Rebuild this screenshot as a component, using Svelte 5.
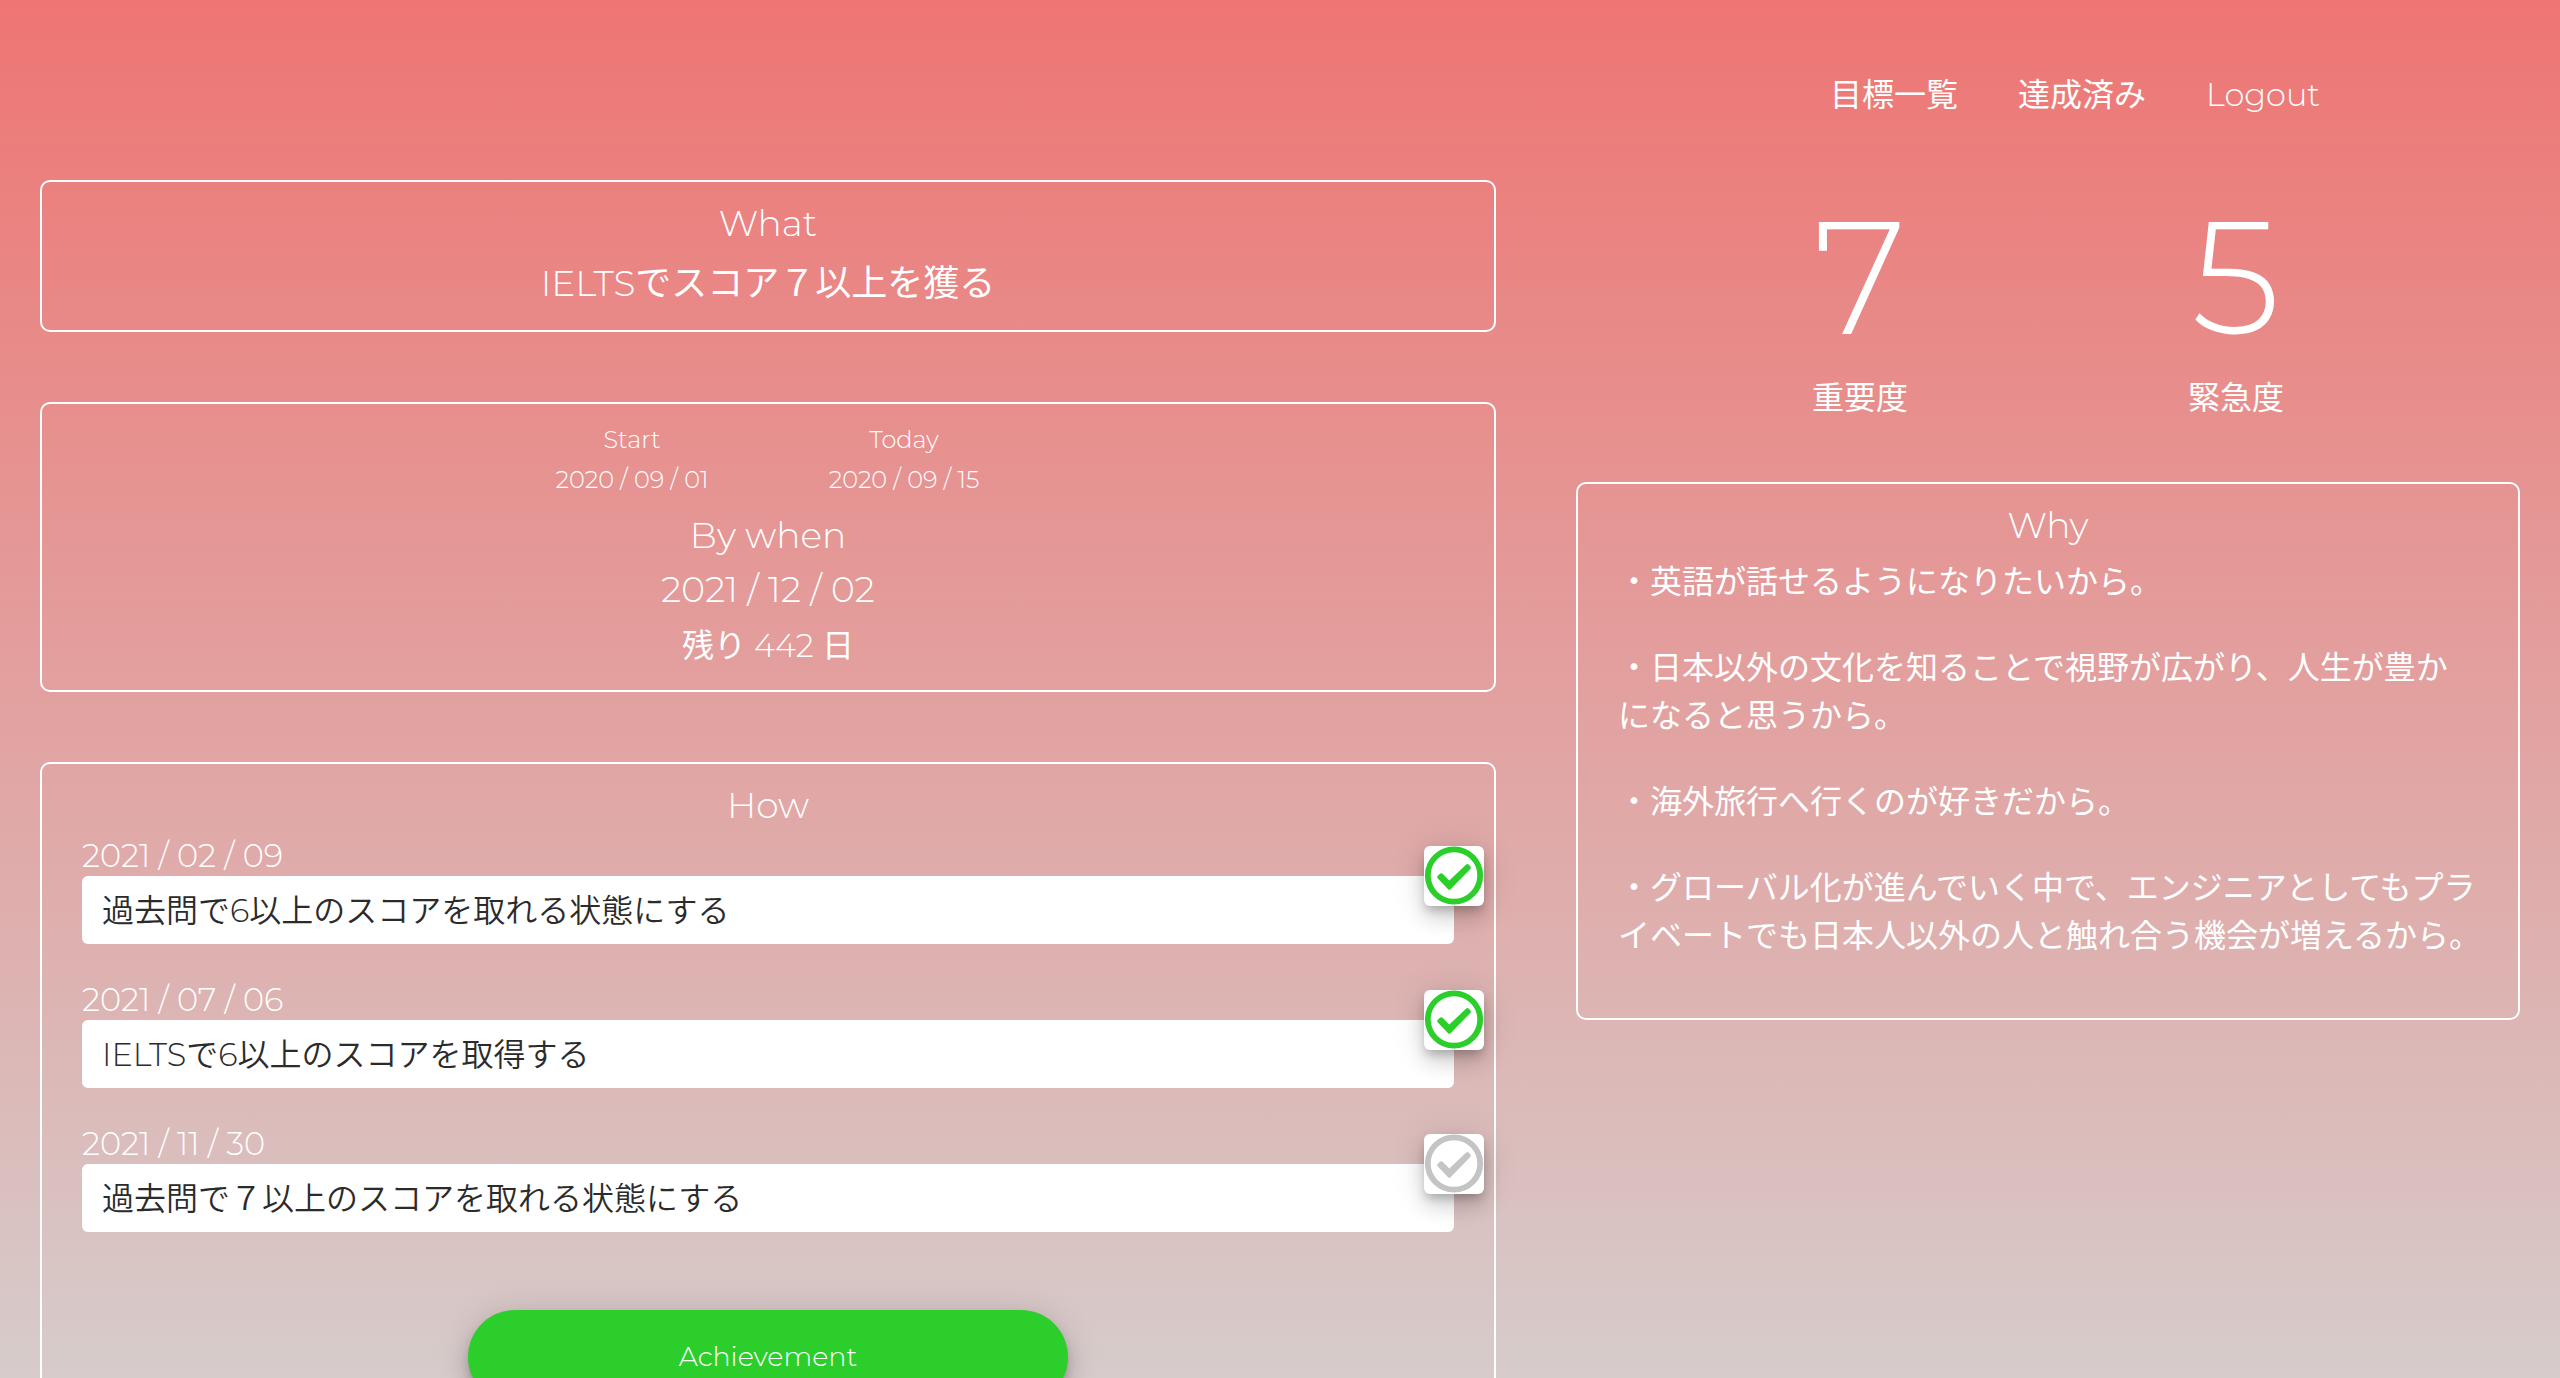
<script lang="ts">
  const links = ['目標一覧', '達成済み', 'Logout'];
  const scores = [
    { value: 7, label: '重要度' },
    { value: 5, label: '緊急度' },
  ];
  const dates = [
    { label: 'Start', value: '2020 / 09 / 01' },
    { label: 'Today', value: '2020 / 09 / 15' },
  ];
  const reasons = [
    '・英語が話せるようになりたいから。',
    '・日本以外の文化を知ることで視野が広がり、人生が豊か\nになると思うから。',
    '・海外旅行へ行くのが好きだから。',
    '・グローバル化が進んでいく中で、エンジニアとしてもプライベートでも日本人以外の人と触れ合う機会が増えるから。',
  ];
  let steps = $state([
    { date: '2021 / 02 / 09', text: '過去問で6以上のスコアを取れる状態にする', done: true },
    { date: '2021 / 07 / 06', text: 'IELTSで6以上のスコアを取得する', done: true },
    { date: '2021 / 11 / 30', text: '過去問で７以上のスコアを取れる状態にする', done: false },
  ]);
</script>

<div class="page">
  <header>
    <nav>
      {#each links as link}
        <a href="#top" class:ja={link !== 'Logout'}>{link}</a>
      {/each}
    </nav>
  </header>

  <main>
    <div class="column">
      <section class="card what">
        <h2>What</h2>
        <p class="goal">IELTS<span class="ja">でスコア７以上を獲る</span></p>
      </section>

      <section class="card when">
        <div class="dates">
          {#each dates as d}
            <div>
              <p>{d.label}</p>
              <p>{d.value}</p>
            </div>
          {/each}
        </div>
        <h2>By when</h2>
        <p class="deadline">2021 / 12 / 02</p>
        <p class="left"><span class="ja">残り</span> 442 <span class="ja">日</span></p>
      </section>

      <section class="card how">
        <h2>How</h2>
        {#each steps as step, i}
          <div class="step">
            <label for="step-{i}">{step.date}</label>
            <div class="field">
              <input id="step-{i}" type="text" bind:value={step.text} />
              <button
                class="check"
                class:done={step.done}
                aria-label="達成"
                aria-pressed={step.done}
                onclick={() => (step.done = !step.done)}
              >
                <svg viewBox="0 0 60 60" aria-hidden="true">
                  <circle cx="30" cy="29.5" r="26.2" fill="none" stroke="currentColor" stroke-width="5.8" />
                  <path
                    d="M13.6 29.9 L16.2 27.6 Q17.4 26.7 18.6 27.8 L25.3 34.6 L42.2 18.5 Q43.4 17.5 44.6 18.6 L46.5 20.6 Q47.4 21.8 46.3 23 L26.5 43.2 Q25.3 44.4 24.1 43.2 L13.6 32.3 Q12.6 31.1 13.6 29.9 Z"
                    fill="currentColor"
                  />
                </svg>
              </button>
            </div>
          </div>
        {/each}
        <button class="achieve">Achievement</button>
      </section>
    </div>

    <div class="column side">
      <div class="scores">
        {#each scores as s}
          <div>
            <p class="value">{s.value}</p>
            <p class="ja">{s.label}</p>
          </div>
        {/each}
      </div>

      <section class="card why">
        <h2>Why</h2>
        {#each reasons as reason}
          <p class="ja">{reason}</p>
        {/each}
      </section>
    </div>
  </main>
</div>

<style>
  :global(body) {
    margin: 0;
  }
  .page {
    height: 100vh;
    overflow: auto;
    scrollbar-width: none;
    background: linear-gradient(#ee7573, #d6cccb);
    color: #fff;
    font-family: Montserrat, Inter, 'Noto Sans CJK JP', sans-serif;
    font-weight: 300;
    font-size: 32px;
    line-height: 48px;
  }
  h2,
  p {
    margin: 0;
    font-weight: inherit;
  }
  .ja {
    font-weight: 400;
  }
  h2,
  .goal,
  .deadline {
    font-size: 36px;
    line-height: 54px;
  }
  header {
    display: grid;
    grid-template-columns: 3fr 2fr;
    padding: 71px 0 61px;
  }
  nav {
    grid-column: 2;
    display: flex;
    justify-content: center;
    gap: 60px;
    padding-left: 54px;
  }
  nav a {
    color: inherit;
    text-decoration: none;
  }
  main {
    display: grid;
    grid-template-columns: 3fr 2fr;
    align-items: start;
  }
  .column {
    display: flex;
    flex-direction: column;
    gap: 70px;
    padding: 0 40px 80px;
  }
  .side {
    gap: 60px;
  }
  .card {
    border: 2px solid #fff;
    border-radius: 10px;
    padding: 14px 40px;
    text-align: center;
  }
  .goal {
    line-height: 66px;
  }
  .when {
    padding: 16px 40px 14px;
  }
  .dates {
    display: grid;
    grid-template-columns: 272px 272px;
    justify-content: center;
    padding-bottom: 8px;
    font-size: 24px;
    line-height: 40px;
  }
  .left {
    line-height: 60px;
  }
  .how h2 {
    margin-bottom: 4px;
  }
  .step {
    padding-bottom: 36px;
    text-align: left;
  }
  .step label {
    display: block;
    line-height: 40px;
  }
  .field {
    position: relative;
  }
  input {
    display: block;
    box-sizing: border-box;
    width: 100%;
    height: 68px;
    padding: 0 20px 4px;
    border: 0;
    border-radius: 6px;
    background: #fff;
    color: #2b2b2b;
    font: inherit;
    font-weight: 340;
  }
  button {
    border: 0;
    padding: 0;
    font: inherit;
    cursor: pointer;
    box-shadow:
      0 6px 10px -2px rgba(0, 0, 0, 0.2),
      0 12px 20px rgba(0, 0, 0, 0.14),
      0 2px 36px rgba(0, 0, 0, 0.12);
  }
  .check {
    position: absolute;
    top: -30px;
    right: -30px;
    width: 60px;
    height: 60px;
    border-radius: 6px;
    background: #fff;
    color: #c4c4c4;
  }
  .check.done {
    color: #2bce2b;
  }
  .check svg {
    display: block;
  }
  .achieve {
    width: 600px;
    height: 94px;
    margin: 42px 0 40px;
    border-radius: 47px;
    background: #2bce2b;
    color: #fff;
    font-size: 27px;
  }
  .scores {
    display: flex;
    justify-content: center;
    text-align: center;
  }
  .scores > div {
    width: 376px;
  }
  .value {
    font-size: 160px;
    line-height: 194px;
  }
  .why {
    padding-bottom: 61px;
  }
  .why h2 {
    margin-bottom: 3px;
  }
  .why p {
    margin-right: -12px;
    margin-bottom: 38px;
    font-family: 'Noto Sans CJK JP', sans-serif;
    text-align: left;
    white-space: pre-line;
  }
  .why p:last-child {
    margin-bottom: 0;
  }
</style>
